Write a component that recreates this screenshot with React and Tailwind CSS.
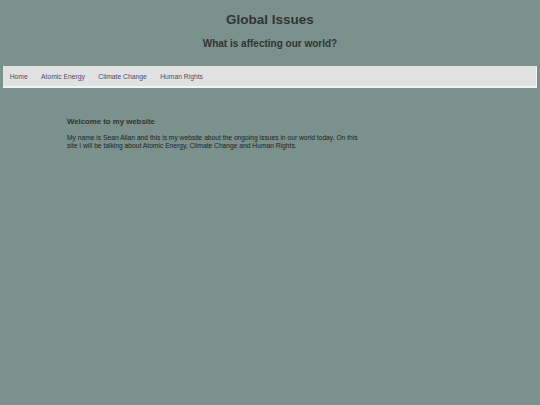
const links = ["Home", "Atomic Energy", "Climate Change", "Human Rights"];

export default function App() {
  return (
    <div className="min-h-[405px] w-full bg-[#7a918c] font-['Liberation_Sans',Arial,sans-serif] text-[#333333]">
      <header className="pt-[11px] text-center">
        <h1 className="text-[13.5px] font-bold leading-[18px]">Global Issues</h1>
        <h2 className="mt-[8px] text-[10px] font-bold leading-[13px]">
          What is affecting our world?
        </h2>
      </header>

      <nav className="mx-[3px] mt-[16px] flex h-[22px] items-center border-r border-b-2 border-[#f2f2f2] bg-[#e1e1e1] pt-[1px]">
        {links.map((l) => (
          <a
            key={l}
            href="#"
            className="px-[6.7px] text-[6.75px] leading-[20px] text-[#4b4d66]"
          >
            {l}
          </a>
        ))}
      </nav>

      <main className="pl-[67px] pt-[29px]">
        <h3 className="text-[7.8px] font-bold leading-[10px]">Welcome to my website</h3>
        <p className="mt-[7px] w-[300px] text-[6.7px] leading-[7.5px] text-[#222222]">
          My name is Sean Allan and this is my website about the ongoing issues in our
          world today. On this site I will be talking about Atomic Energy, Climate Change
          and Human Rights.
        </p>
      </main>
    </div>
  );
}
